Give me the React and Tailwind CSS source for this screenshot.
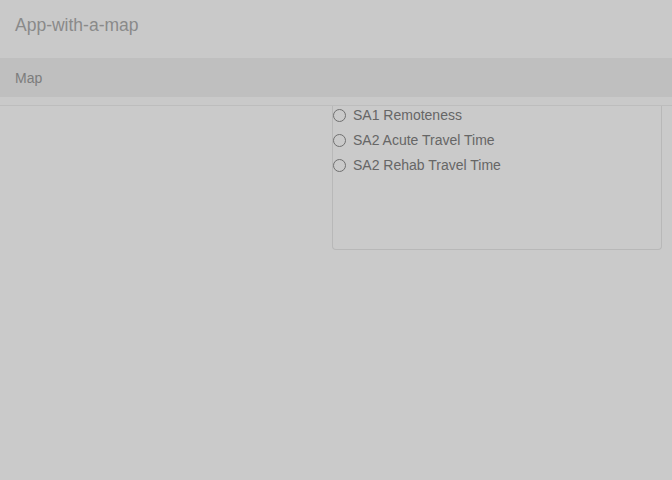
import React from 'react';

const layers = ['SA1 Remoteness', 'SA2 Acute Travel Time', 'SA2 Rehab Travel Time'];

const App = () => {
  return (
    <div className="min-h-[480px] w-full bg-[#cacaca] font-['Liberation_Sans',Arial,sans-serif]">
      {/* Title bar */}
      <div className="h-[58px] flex items-center px-[15px] bg-[#c9c9c9]">
        <span className="text-[17.5px] text-[#8a8a8a] -mt-[8px]">App-with-a-map</span>
      </div>

      {/* Nav */}
      <div className="h-[39px] flex items-center px-[15px] bg-[#bfbfbf]">
        <span className="text-[14px] text-[#7c7c7c] mt-px">Map</span>
      </div>

      <div className="h-[8px] bg-[#c9c9c9]"></div>

      {/* Content */}
      <div className="border-t border-[#bdbdbd] grid grid-cols-[332px_330px_1fr]">
        <div></div>
        <div className="h-[144px] border-l border-r border-b border-[#b8b8b8] rounded-b-[4px]">
          <div className="flex flex-col gap-[5px] -mt-px">
            {layers.map((label) => (
              <label key={label} className="h-[20px] flex items-center gap-[7px] text-[14px] text-[#666666]">
                <span className="w-[13px] h-[13px] rounded-full border border-[#707070] bg-[#cacaca]"></span>
                {label}
              </label>
            ))}
          </div>
        </div>
        <div></div>
      </div>
    </div>
  );
};

export default App;
